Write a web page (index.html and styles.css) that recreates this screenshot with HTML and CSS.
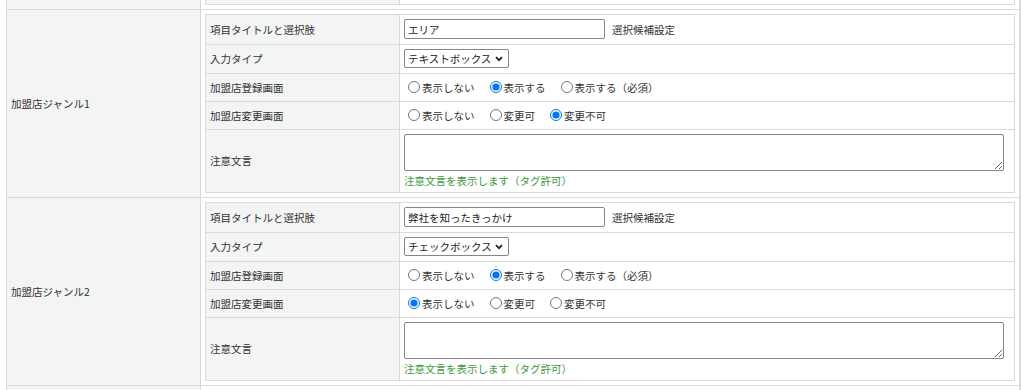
FILE: index.html
```html
<!DOCTYPE html>
<html lang="ja">
<head>
<meta charset="utf-8">
<title>加盟店項目設定</title>
<link rel="stylesheet" href="styles.css">
</head>
<body>
<div class="page">
  <table class="settings">
    <!-- tail of the previous item, scrolled off the top -->
    <tr class="stub-top">
      <th></th>
      <td><table class="item"><tr class="r-stub"><th></th><td></td></tr></table></td>
    </tr>

    <tr>
      <th>加盟店ジャンル1</th>
      <td>
        <table class="item">
          <tr class="r-title">
            <th>項目タイトルと選択肢</th>
            <td><input type="text" class="txt" value="エリア"><span class="opt">選択候補設定</span></td>
          </tr>
          <tr class="r-type">
            <th>入力タイプ</th>
            <td>
              <span class="sel-wrap">
                <select class="sel"><option>テキストボックス</option><option>チェックボックス</option></select>
                <svg class="chev" width="8" height="6" viewBox="0 0 8 6"><path d="M1 1.2 L4 4.2 L7 1.2" fill="none" stroke="#222" stroke-width="1.8"/></svg>
              </span>
            </td>
          </tr>
          <tr class="r-radio">
            <th>加盟店登録画面</th>
            <td>
              <div class="radios">
                <label><input type="radio" name="g1reg">表示しない</label>
                <label><input type="radio" name="g1reg" checked>表示する</label>
                <label><input type="radio" name="g1reg">表示する（必須）</label>
              </div>
            </td>
          </tr>
          <tr class="r-radio">
            <th>加盟店変更画面</th>
            <td>
              <div class="radios">
                <label><input type="radio" name="g1chg">表示しない</label>
                <label><input type="radio" name="g1chg">変更可</label>
                <label><input type="radio" name="g1chg" checked>変更不可</label>
              </div>
            </td>
          </tr>
          <tr class="r-note">
            <th>注意文言</th>
            <td>
              <textarea class="memo"></textarea>
              <div class="hint">注意文言を表示します（タグ許可）</div>
            </td>
          </tr>
        </table>
      </td>
    </tr>

    <tr>
      <th>加盟店ジャンル2</th>
      <td>
        <table class="item">
          <tr class="r-title">
            <th>項目タイトルと選択肢</th>
            <td><input type="text" class="txt" value="弊社を知ったきっかけ"><span class="opt">選択候補設定</span></td>
          </tr>
          <tr class="r-type">
            <th>入力タイプ</th>
            <td>
              <span class="sel-wrap">
                <select class="sel"><option>テキストボックス</option><option selected>チェックボックス</option></select>
                <svg class="chev" width="8" height="6" viewBox="0 0 8 6"><path d="M1 1.2 L4 4.2 L7 1.2" fill="none" stroke="#222" stroke-width="1.8"/></svg>
              </span>
            </td>
          </tr>
          <tr class="r-radio">
            <th>加盟店登録画面</th>
            <td>
              <div class="radios">
                <label><input type="radio" name="g2reg">表示しない</label>
                <label><input type="radio" name="g2reg" checked>表示する</label>
                <label><input type="radio" name="g2reg">表示する（必須）</label>
              </div>
            </td>
          </tr>
          <tr class="r-radio">
            <th>加盟店変更画面</th>
            <td>
              <div class="radios">
                <label><input type="radio" name="g2chg" checked>表示しない</label>
                <label><input type="radio" name="g2chg">変更可</label>
                <label><input type="radio" name="g2chg">変更不可</label>
              </div>
            </td>
          </tr>
          <tr class="r-note">
            <th>注意文言</th>
            <td>
              <textarea class="memo"></textarea>
              <div class="hint">注意文言を表示します（タグ許可）</div>
            </td>
          </tr>
        </table>
      </td>
    </tr>

    <!-- next item starts below the fold -->
    <tr class="stub-bottom">
      <th></th>
      <td><table class="item"><tr class="r-title"><th></th><td></td></tr></table></td>
    </tr>
  </table>
</div>
</body>
</html>
```

FILE: styles.css
```css
body {
    margin: 0;
    background: #fff;
    color: #333;
    font-family: "Noto Sans CJK JP", "Noto Sans", sans-serif;
    font-size: 10.5px;
    overflow: hidden;
}
.page { padding-left: 6px; }

table { border-collapse: collapse; table-layout: fixed; }

/* outer table: genre name | item block */
.settings { width: 1015px; border-right: 2px solid #dcdcdc; }
.settings > tbody > tr > th,
.settings > tbody > tr > td { border: 1px solid #d9d9d9; }
.settings > tbody > tr > th {
    width: 185px;
    padding: 0 4px;
    background: #f3f4f4;
    font-weight: normal;
    text-align: left;
    vertical-align: middle;
}
.settings > tbody > tr > td { padding: 4px; background: #fff; }

.stub-top > td { padding-top: 0 !important; border-top: none !important; }
.stub-top > th { border-top: none !important; }
.r-stub { height: 4px; }
.r-stub th, .r-stub td { border-top: none !important; }

/* inner table: field label | control */
.item { width: 100%; }
.item th, .item td { border: 1px solid #d9d9d9; }
.item th {
    width: 185px;
    padding: 0 4px;
    background: #f3f4f4;
    font-weight: normal;
    text-align: left;
    vertical-align: middle;
}
.item td { padding: 0 4px; background: #fff; vertical-align: middle; }

.r-title { height: 30px; }
.r-type { height: 29px; }
.r-radio { height: 28px; }

.txt {
    box-sizing: border-box;
    width: 201px;
    height: 20px;
    margin: 0;
    padding: 0 3px;
    border: 1px solid #858585;
    border-radius: 2px;
    font: inherit;
    color: #222;
    vertical-align: middle;
}
.opt { margin-left: 7px; vertical-align: middle; }

.sel-wrap { position: relative; display: inline-block; vertical-align: middle; }
.sel {
    appearance: none;
    box-sizing: border-box;
    width: 105px;
    height: 19px;
    margin: 0;
    padding: 0 0 0 3px;
    border: 1px solid #858585;
    border-radius: 2px;
    background: #fff;
    font: inherit;
    color: #222;
    display: block;
}
.chev { position: absolute; right: 6px; top: 7px; pointer-events: none; }

.radios { display: flex; gap: 11px; }
.radios label { display: inline-flex; align-items: center; }
.radios input {
    width: 12px;
    height: 12px;
    margin: 0 2px 0 4px;
}

.r-note td { padding-top: 4px; padding-bottom: 3px; }
.memo {
    display: block;
    box-sizing: border-box;
    width: 600px;
    height: 37px;
    margin: 0;
    border: 1px solid #858585;
    border-radius: 2px;
    font: inherit;
}
.hint { margin-top: 2px; line-height: 16px; color: #3a9a3a; }
```
